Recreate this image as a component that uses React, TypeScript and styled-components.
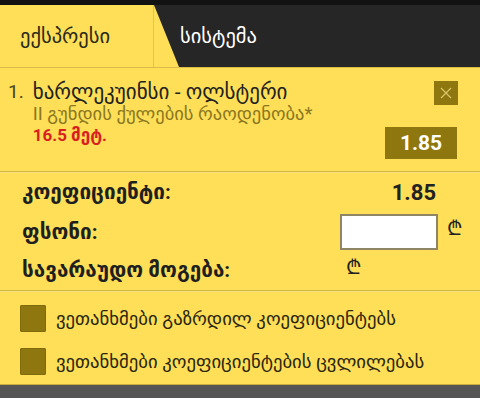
import React, { useState } from 'react';
import styled, { createGlobalStyle } from 'styled-components';

const GlobalStyle = createGlobalStyle`
  html, body {
    margin: 0;
    padding: 0;
    background: #555555;
  }
  body {
    font-family: Roboto, "DejaVu Sans", sans-serif;
  }
`;

const YELLOW = '#fedf57';
const OLIVE = '#8e770f';

const Slip = styled.div`
  width: 480px;
  height: 398px;
  display: flex;
  flex-direction: column;
  background: #555555;
`;

const TopStrip = styled.div`
  height: 5px;
  background: #121212;
`;

const Tabs = styled.div`
  display: flex;
  height: 62px;
  background: ${YELLOW};
  border-bottom: 1px solid #d9bd45;
`;

const Tab = styled.div<{ $active?: boolean }>`
  display: flex;
  align-items: center;
  font-size: 20.5px;
  color: ${(p) => (p.$active ? '#2a2a1a' : '#ffffff')};
  ${(p) =>
    p.$active
      ? `
    width: 133px;
    padding-left: 20px;
    border-right: 1px solid #e3c54a;
  `
      : `
    flex: 1;
    padding-left: 26px;
    background: #262626;
    clip-path: polygon(0 0, 100% 0, 100% 100%, 25px 100%);
  `}
`;

const Content = styled.div`
  background: ${YELLOW};
`;

const BetItem = styled.div`
  display: flex;
  justify-content: space-between;
  padding: 13px 22px 12px 8px;
  border-bottom: 1px solid #d3b744;
  box-shadow: 0 1px 0 #f6e27a;
`;

const BetInfo = styled.div`
  display: flex;
  gap: 9px;
`;

const Num = styled.span`
  font-size: 19px;
  color: #4a4320;
  line-height: 22px;
`;

const BetLines = styled.div`
  display: flex;
  flex-direction: column;
`;

const Match = styled.div`
  font-size: 21px;
  color: #222;
  line-height: 22px;
`;

const Market = styled.div`
  font-size: 18.5px;
  color: #8a7722;
  line-height: 22px;
`;

const Pick = styled.div`
  font-size: 17px;
  font-weight: bold;
  color: #d81f1f;
  line-height: 20px;
`;

const BetSide = styled.div`
  display: flex;
  flex-direction: column;
  align-items: flex-end;
  gap: 22px;
`;

const CloseButton = styled.button`
  width: 24px;
  height: 24px;
  padding: 0;
  border: none;
  background: ${OLIVE};
  display: flex;
  align-items: center;
  justify-content: center;
  cursor: pointer;
`;

const OddsBox = styled.div`
  width: 72px;
  height: 32px;
  margin-right: 1px;
  background: ${OLIVE};
  color: #fff;
  font-size: 21px;
  font-weight: bold;
  display: flex;
  align-items: center;
  justify-content: center;
`;

const Summary = styled.div`
  display: flex;
  flex-direction: column;
  padding: 0 18px 2px 22px;
  border-bottom: 1px solid #d3b744;
  box-shadow: 0 1px 0 #f6e27a;
`;

const Row = styled.div<{ $h: number }>`
  display: flex;
  align-items: center;
  height: ${(p) => p.$h}px;
`;

const Label = styled.div<{ $w?: number }>`
  flex: ${(p) => (p.$w ? `0 0 ${p.$w}px` : '1')};
  font-size: 20.7px;
  font-weight: bold;
  color: #1f1f1f;
`;

const Value = styled.div`
  font-size: 22px;
  font-weight: bold;
  color: #222;
  margin-right: 26px;
`;

const StakeInput = styled.input`
  width: 94px;
  height: 32px;
  box-sizing: content-box;
  padding: 0;
  border: 2px solid #8d8563;
  background: #fff;
  outline: none;
`;

const Lari = styled.span<{ $gap: number }>`
  font-size: 20px;
  color: #222;
  margin-left: ${(p) => p.$gap}px;
  align-self: flex-start;
  margin-top: 2px;
`;

const Options = styled.div`
  display: flex;
  flex-direction: column;
  gap: 16px;
  padding: 14px 20px 9px;
  border-bottom: 1px solid #c9ae3c;
`;

const Option = styled.label`
  display: flex;
  align-items: center;
  gap: 10px;
  font-size: 18.7px;
  color: #2a2610;
  cursor: pointer;
`;

const Box = styled.span<{ $on: boolean }>`
  width: 26px;
  height: 27px;
  border-radius: 2px;
  background: ${(p) => (p.$on ? '#6d5b08' : OLIVE)};
  box-shadow: inset 0 0 0 1px #7f6a0c;
  flex-shrink: 0;
`;

const Footer = styled.div`
  flex: 1;
  background: #555555;
`;

export default function App() {
  const [stake, setStake] = useState('');
  const [agree, setAgree] = useState([false, false]);

  const toggle = (i: number) =>
    setAgree((a) => a.map((v, j) => (j === i ? !v : v)));

  return (
    <Slip>
      <GlobalStyle />
      <TopStrip />
      <Tabs>
        <Tab $active>ექსპრესი</Tab>
        <Tab>სისტემა</Tab>
      </Tabs>
      <Content>
        <BetItem>
          <BetInfo>
            <Num>1.</Num>
            <BetLines>
              <Match>ხარლეკუინსი - ოლსტერი</Match>
              <Market>II გუნდის ქულების რაოდენობა*</Market>
              <Pick>16.5 მეტ.</Pick>
            </BetLines>
          </BetInfo>
          <BetSide>
            <CloseButton aria-label="close">
              <svg width="12" height="12" viewBox="0 0 12 12">
                <path d="M1 1L11 11M11 1L1 11" stroke="#d8c56a" strokeWidth="1.3" />
              </svg>
            </CloseButton>
            <OddsBox>1.85</OddsBox>
          </BetSide>
        </BetItem>
        <Summary>
          <Row $h={40}>
            <Label>კოეფიციენტი:</Label>
            <Value>1.85</Value>
          </Row>
          <Row $h={39}>
            <Label>ფსონი:</Label>
            <StakeInput value={stake} onChange={(e) => setStake(e.target.value)} />
            <Lari $gap={9}>₾</Lari>
          </Row>
          <Row $h={37}>
            <Label $w={324}>სავარაუდო მოგება:</Label>
            <Lari $gap={0}>₾</Lari>
          </Row>
        </Summary>
        <Options>
          <Option onClick={() => toggle(0)}>
            <Box $on={agree[0]} />
            ვეთანხმები გაზრდილ კოეფიციენტებს
          </Option>
          <Option onClick={() => toggle(1)}>
            <Box $on={agree[1]} />
            ვეთანხმები კოეფიციენტების ცვლილებას
          </Option>
        </Options>
      </Content>
      <Footer />
    </Slip>
  );
}
